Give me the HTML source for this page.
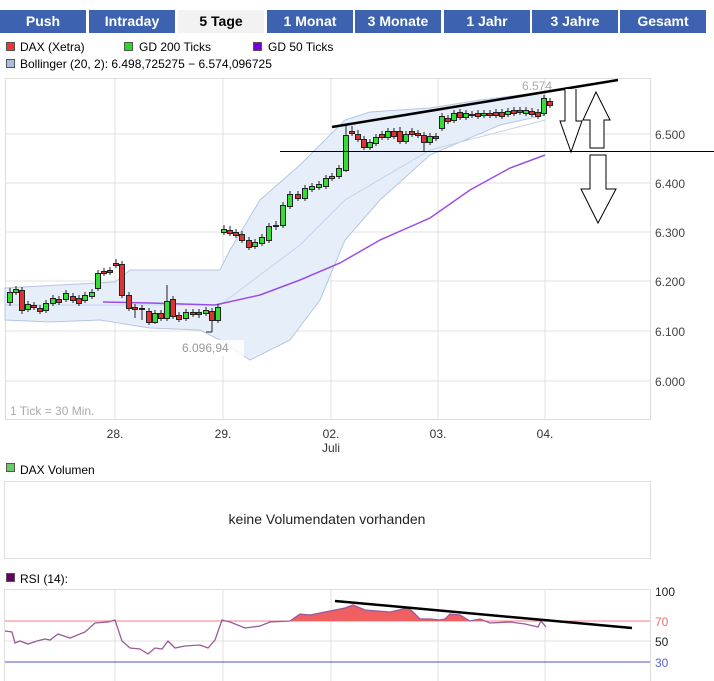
<!DOCTYPE html>
<html><head><meta charset="utf-8"><style>
body{margin:0;background:#fff;width:714px;height:681px;overflow:hidden;font-family:"Liberation Sans",sans-serif;}
.tabs{position:absolute;top:10px;left:0;}
.tab{position:absolute;top:0;height:23px;width:86px;background:#3d63b0;color:#fff;font-weight:bold;font-size:14px;line-height:23px;text-align:center;}
.tab.sel{background:#f2f2f2;color:#000;}
svg{position:absolute;top:0;left:0}
</style></head><body>
<div class="tabs">
<div class="tab" style="left:0">Push</div>
<div class="tab" style="left:89px">Intraday</div>
<div class="tab sel" style="left:178px">5 Tage</div>
<div class="tab" style="left:267px">1 Monat</div>
<div class="tab" style="left:355px">3 Monate</div>
<div class="tab" style="left:444px">1 Jahr</div>
<div class="tab" style="left:532px">3 Jahre</div>
<div class="tab" style="left:620px">Gesamt</div>
</div>
<svg width="714" height="681" font-family="Liberation Sans, sans-serif" font-size="12">
<defs><clipPath id="c70"><rect x="0" y="560" width="714" height="61"/></clipPath></defs>
<!-- legend -->
<rect x="6.5" y="42.5" width="8" height="8" fill="#e33" stroke="#555"/><text x="20" y="51">DAX (Xetra)</text>
<rect x="124.5" y="42.5" width="8" height="8" fill="#2d2" stroke="#555"/><text x="139" y="51">GD 200 Ticks</text>
<rect x="253.5" y="42.5" width="8" height="8" fill="#70d" stroke="#555"/><text x="268" y="51">GD 50 Ticks</text>
<rect x="6.5" y="59.5" width="8" height="8" fill="#a9bde0" stroke="#555"/><text x="20" y="68">Bollinger (20, 2): 6.498,725275 − 6.574,096725</text>
<!-- main frame -->
<rect x="5.5" y="78.5" width="645" height="341" fill="#fff" stroke="#ddd"/>
<g stroke="#e0e0e0">
<line x1="115" y1="79" x2="115" y2="420"/><line x1="223" y1="79" x2="223" y2="420"/><line x1="331" y1="79" x2="331" y2="420"/><line x1="438" y1="79" x2="438" y2="420"/><line x1="545" y1="79" x2="545" y2="420"/>
<line x1="6" y1="134" x2="650" y2="134"/><line x1="6" y1="183" x2="650" y2="183"/><line x1="6" y1="232" x2="650" y2="232"/><line x1="6" y1="281" x2="650" y2="281"/><line x1="6" y1="331" x2="650" y2="331"/><line x1="6" y1="381" x2="650" y2="381"/>
</g>
<path d="M5,288 L115,282 L130,270 L220,270 L230,250 L260,200 L300,165 L330,135 L345,120 L370,112 L430,108 L480,100 L545,92 L545,115 L500,125 L430,155 L380,200 L345,240 L320,300 L290,340 L250,360 L220,340 L200,330 L150,328 L100,320 L50,322 L5,320 Z" fill="#e6eefa" stroke="#b5c6e2"/>
<path d="M5,305 L220,305 L300,245 L345,200 L430,150 L545,120" fill="none" stroke="#c2d4ec"/>
<path d="M103,302 L150,303 L215,305 L260,295 L300,280 L340,263 L380,240 L430,218 L470,190 L510,168 L545,155" fill="none" stroke="#9a4de6" stroke-width="1.5"/>
<g fill="#444" font-size="12">
<text x="655" y="139">6.500</text><text x="655" y="188">6.400</text><text x="655" y="237">6.300</text><text x="655" y="286">6.200</text><text x="655" y="336">6.100</text><text x="655" y="386">6.000</text>
</g>
<g fill="#333" text-anchor="middle"><text x="115" y="438">28.</text><text x="223" y="438">29.</text><text x="331" y="438">02.</text><text x="331" y="452">Juli</text><text x="438" y="438">03.</text><text x="545" y="438">04.</text></g>
<text x="10" y="415" fill="#aaa">1 Tick = 30 Min.</text>
<rect x="180" y="340" width="64" height="16" fill="#fff" opacity=".8"/>
<text x="182" y="352" fill="#999">6.096,94</text>
<text x="522" y="90" fill="#aaa">6.574</text>
<!-- candles -->
<g id="cd" stroke="#222" stroke-width="1">
<g id="w"></g>
</g>
<g stroke="#222">
<path d="M10,288V306M16,286V295M22,287V314M28,301V312M34,302V310M40,305V314M46,300V313M53,295V306M59,296V305M66,290V302M73,293V303M79,295V306M85,292V303M92,289V299M98,270V291M104,268V276M110,267V275M116,259V268M122,261V298M129,292V311M135,304V318M142,305V320M149,308V325M155,310V324M161,310V321M167,285V321M173,296V319M179,312V322M186,309V321M193,309V317M199,309V318M206,307V316M212,308V332M218,304V323M212,332H206M224,225V235M230,226V236M236,229V238M242,231V243M249,237V250M255,239V249M262,234V246M269,223V243M276,221V230M283,202V228M290,191V209M298,191V201M305,185V201M312,183V192M319,181V190M326,175V189M332,173V181M339,165V179M346,125V172M352,126V136M358,130V142M364,136V150M370,139V150M376,134V146M382,131V140M388,128V140M394,128V139M400,127V144M406,131V144M412,128V137M418,130V138M424,132V151M430,133V145M436,133V141M442,113V131M448,115V124M454,110V123M460,109V120M466,110V120M472,111V118M478,110V119M484,110V118M490,110V118M496,109V118M502,109V119M508,108V117M514,107V116M520,107V115M526,107V116M532,108V117M538,109V119M544,95V116M550,98V108"/>
</g>
<g stroke="#222" fill="#3d3">
<rect x="7.5" y="292.5" width="5" height="10"/><rect x="13.5" y="289.5" width="5" height="3"/><rect x="25.5" y="304.5" width="5" height="5"/><rect x="43.5" y="303.5" width="5" height="7"/><rect x="50.5" y="298.5" width="5" height="5"/><rect x="63.5" y="293.5" width="5" height="6"/><rect x="82.5" y="295.5" width="5" height="5"/><rect x="89.5" y="292.5" width="5" height="4"/><rect x="95.5" y="273.5" width="5" height="15"/><rect x="152.5" y="313.5" width="5" height="9"/><rect x="164.5" y="301.5" width="5" height="17"/><rect x="183.5" y="312.5" width="5" height="6"/><rect x="203.5" y="310.5" width="5" height="3"/><rect x="215.5" y="307.5" width="5" height="13"/>
<rect x="221.5" y="229.5" width="5" height="3"/><rect x="252.5" y="242.5" width="5" height="4"/><rect x="259.5" y="237.5" width="5" height="6"/><rect x="266.5" y="226.5" width="5" height="14"/><rect x="280.5" y="205.5" width="5" height="20"/><rect x="287.5" y="194.5" width="5" height="12"/><rect x="302.5" y="188.5" width="5" height="10"/><rect x="309.5" y="186.5" width="5" height="3"/><rect x="316.5" y="184.5" width="5" height="3"/><rect x="323.5" y="178.5" width="5" height="8"/><rect x="329.5" y="176.5" width="5" height="2"/><rect x="336.5" y="168.5" width="5" height="8"/><rect x="343.5" y="135.5" width="5" height="35"/><rect x="367.5" y="142.5" width="5" height="5"/><rect x="373.5" y="137.5" width="5" height="6"/><rect x="385.5" y="131.5" width="5" height="6"/><rect x="403.5" y="134.5" width="5" height="7"/><rect x="427.5" y="136.5" width="5" height="6"/><rect x="439.5" y="116.5" width="5" height="12"/><rect x="451.5" y="113.5" width="5" height="7"/><rect x="463.5" y="113.5" width="5" height="4"/><rect x="481.5" y="113.5" width="5" height="2"/><rect x="505.5" y="111.5" width="5" height="3"/><rect x="523.5" y="110.5" width="5" height="3"/><rect x="541.5" y="98.5" width="5" height="15"/>
</g>
<g stroke="#222" fill="#d33">
<rect x="19.5" y="290.5" width="5" height="20"/><rect x="31.5" y="305.5" width="5" height="2"/><rect x="37.5" y="308.5" width="5" height="3"/><rect x="56.5" y="299.5" width="5" height="3"/><rect x="70.5" y="296.5" width="5" height="4"/><rect x="76.5" y="298.5" width="5" height="5"/><rect x="101.5" y="271.5" width="5" height="2"/><rect x="107.5" y="270.5" width="5" height="2"/><rect x="113.5" y="263.5" width="5" height="2"/><rect x="119.5" y="264.5" width="5" height="31"/><rect x="126.5" y="295.5" width="5" height="13"/><rect x="132.5" y="307.5" width="5" height="2"/><rect x="139.5" y="308.5" width="5" height="1"/><rect x="146.5" y="311.5" width="5" height="11"/><rect x="158.5" y="313.5" width="5" height="5"/><rect x="170.5" y="299.5" width="5" height="17"/><rect x="176.5" y="315.5" width="5" height="4"/><rect x="190.5" y="312.5" width="5" height="2"/><rect x="196.5" y="312.5" width="5" height="2"/><rect x="209.5" y="311.5" width="5" height="9"/>
<rect x="227.5" y="230.5" width="5" height="3"/><rect x="233.5" y="232.5" width="5" height="3"/><rect x="239.5" y="234.5" width="5" height="6"/><rect x="246.5" y="240.5" width="5" height="7"/><rect x="273.5" y="225.5" width="5" height="1"/><rect x="295.5" y="194.5" width="5" height="4"/><rect x="349.5" y="131.5" width="5" height="2"/><rect x="355.5" y="134.5" width="5" height="5"/><rect x="361.5" y="139.5" width="5" height="8"/><rect x="379.5" y="134.5" width="5" height="3"/><rect x="391.5" y="131.5" width="5" height="5"/><rect x="397.5" y="131.5" width="5" height="10"/><rect x="409.5" y="131.5" width="5" height="3"/><rect x="415.5" y="133.5" width="5" height="2"/><rect x="421.5" y="135.5" width="5" height="7"/><rect x="433.5" y="136.5" width="5" height="2"/><rect x="445.5" y="118.5" width="5" height="3"/><rect x="457.5" y="112.5" width="5" height="5"/><rect x="469.5" y="114.5" width="5" height="1"/><rect x="475.5" y="113.5" width="5" height="3"/><rect x="487.5" y="113.5" width="5" height="2"/><rect x="493.5" y="112.5" width="5" height="3"/><rect x="499.5" y="112.5" width="5" height="4"/><rect x="511.5" y="110.5" width="5" height="3"/><rect x="517.5" y="110.5" width="5" height="2"/><rect x="529.5" y="111.5" width="5" height="3"/><rect x="535.5" y="112.5" width="5" height="4"/><rect x="547.5" y="101.5" width="5" height="4"/>
</g>
<!-- annotations -->
<line x1="332" y1="127" x2="618" y2="80" stroke="#000" stroke-width="2.5"/>
<line x1="280" y1="151.5" x2="714" y2="151.5" stroke="#000" stroke-width="1"/>
<path d="M565,89V121H560L571,152L582,121H576V89" fill="#fff" stroke="#000"/>
<path d="M596,92L583,120H590V148H604V120H610Z" fill="#fff" stroke="#000"/>
<path d="M590,155V189H581L598,223L616,189H606V155Z" fill="#fff" stroke="#000"/>
<!-- volume -->
<rect x="6.5" y="463.5" width="8" height="8" fill="#6c6" stroke="#555"/><text x="20" y="474">DAX Volumen</text>
<rect x="4.5" y="481.5" width="646" height="77" fill="#fff" stroke="#ddd"/>
<text x="327" y="524" text-anchor="middle" font-size="14" fill="#222">keine Volumendaten vorhanden</text>
<!-- RSI -->
<rect x="6.5" y="573.5" width="8" height="8" fill="#606" stroke="#555"/><text x="20" y="583">RSI (14):</text>
<rect x="4.5" y="589.5" width="646" height="100" fill="#fff" stroke="#ddd"/>
<g stroke="#e0e0e0"><line x1="115" y1="590" x2="115" y2="681"/><line x1="223" y1="590" x2="223" y2="681"/><line x1="331" y1="590" x2="331" y2="681"/><line x1="438" y1="590" x2="438" y2="681"/><line x1="545" y1="590" x2="545" y2="681"/><line x1="5" y1="641" x2="650" y2="641"/></g>
<line x1="5" y1="621" x2="650" y2="621" stroke="#f08080"/>
<line x1="5" y1="662" x2="650" y2="662" stroke="#5050d0"/>
<polygon clip-path="url(#c70)" fill="#f06060" points="222,621 222,620 230,622 245,628 260,626 270,622 290,621 300,614 310,615 330,611 345,608 353,605 365,610 390,612 408,608 412,611 420,619 430,619 440,620 445,619 450,614 460,615 470,621 480,619 490,623 510,622 525,624 538,627 541,621 546,627 546,621"/>
<polyline fill="none" stroke="#9a5a9a" stroke-width="1.3" points="5,631 12,632 15,643 20,641 28,644 37,641 45,639 50,640 58,634 70,638 85,632 95,623 108,622 115,620 122,641 130,648 140,649 148,654 155,648 162,649 168,641 175,648 185,646 200,645 208,648 215,640 222,620 230,622 245,628 260,626 270,622 290,621 300,614 310,615 330,611 345,608 353,605 365,610 390,612 408,608 412,611 420,619 430,619 440,620 445,619 450,614 460,615 470,621 480,619 490,623 510,622 525,624 538,627 541,621 546,627"/>
<line x1="335" y1="601" x2="632" y2="628" stroke="#000" stroke-width="2.5"/>
<text x="655" y="596" fill="#222">100</text><text x="655" y="626" fill="#e07070">70</text><text x="655" y="646" fill="#222">50</text><text x="655" y="667" fill="#6060d0">30</text>
</svg>
</body></html>
